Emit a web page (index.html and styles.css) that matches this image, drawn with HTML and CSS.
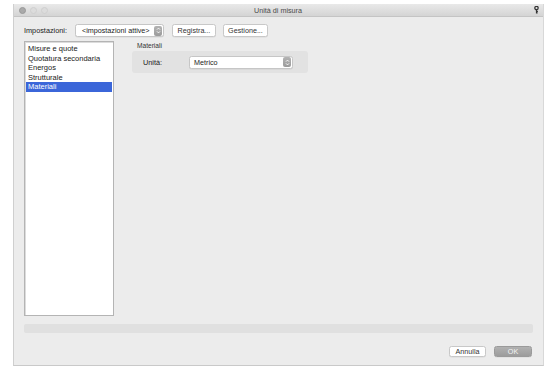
FILE: index.html
```html
<!DOCTYPE html>
<html lang="it">
<head>
<meta charset="utf-8">
<title>Unità di misura</title>
<link rel="stylesheet" href="styles.css">
</head>
<body>
<div class="window">
  <div class="titlebar">
    <div class="lights">
      <span class="light dark"></span>
      <span class="light"></span>
      <span class="light"></span>
    </div>
    <div class="title">Unità di misura</div>
    <svg class="key" width="5" height="8" viewBox="0 0 5 8">
      <circle cx="2.5" cy="2" r="1.7" fill="none" stroke="#333" stroke-width="1.2"/>
      <path d="M2.5 3.5 V7.6 M2.5 5.4 H3.9 M2.5 6.9 H3.6" stroke="#333" stroke-width="1.2" fill="none"/>
    </svg>
  </div>
  <div class="content">
    <div class="toolbar">
      <span class="label">Impostazioni:</span>
      <div class="popup popup-settings">
        <span class="popup-text">&lt;impostazioni attive&gt;</span>
        <span class="stepper"><svg width="5" height="7" viewBox="0 0 5 7"><path d="M1 2.6 L2.5 1.1 L4 2.6 M1 4.4 L2.5 5.9 L4 4.4" stroke="#fff" stroke-width="0.9" fill="none"/></svg></span>
      </div>
      <button class="btn btn-registra">Registra...</button>
      <button class="btn btn-gestione">Gestione...</button>
    </div>
    <div class="main">
      <ul class="list">
        <li>Misure e quote</li>
        <li>Quotatura secondaria</li>
        <li>Energos</li>
        <li>Strutturale</li>
        <li class="selected">Materiali</li>
      </ul>
      <div class="panel">
        <div class="group-title">Materiali</div>
        <div class="group">
          <span class="label-unit">Unità:</span>
          <div class="popup popup-unit">
            <span class="popup-text">Metrico</span>
            <span class="stepper"><svg width="5" height="7" viewBox="0 0 5 7"><path d="M1 2.6 L2.5 1.1 L4 2.6 M1 4.4 L2.5 5.9 L4 4.4" stroke="#fff" stroke-width="0.9" fill="none"/></svg></span>
          </div>
        </div>
      </div>
    </div>
    <div class="stripe"></div>
    <div class="footer">
      <button class="btn btn-annulla">Annulla</button>
      <button class="btn btn-ok">OK</button>
    </div>
  </div>
</div>
</body>
</html>
```
FILE: styles.css
```css
* { box-sizing: border-box; }
html, body { margin: 0; padding: 0; background: #ffffff; }
body {
  font-family: "Liberation Sans", Arial, sans-serif;
  font-size: 7px;
  color: #222;
  width: 555px;
  height: 372px;
  overflow: hidden;
}
.window {
  margin: 4px 0 0 13px;
  width: 531px;
  height: 362px;
  background: #ececec;
  border-left: 1px solid #cfcfcf;
  border-right: 1px solid #d8d8d8;
  border-bottom: 1px solid #c9c9c9;
  display: flex;
  flex-direction: column;
}
.titlebar {
  height: 13px;
  flex: none;
  background: linear-gradient(#e9e9e9, #d4d4d4);
  border-bottom: 1px solid #c4c4c4;
  display: flex;
  align-items: center;
  padding: 0 4px 0 5px;
}
.lights { display: flex; gap: 4px; }
.light {
  width: 7px; height: 7px; border-radius: 50%;
  background: #dcdcdc;
  border: 0.5px solid #cfcfcf;
}
.light.dark { background: #a9a9a9; border-color: #999; }
.title {
  flex: 1;
  text-align: center;
  color: #4a4a4a;
  font-size: 7.2px;
  margin-right: 26px;
}
.key { flex: none; }
.content {
  flex: 1;
  display: flex;
  flex-direction: column;
  padding: 7px 10px 0 9px;
}
.toolbar {
  display: flex;
  align-items: center;
  height: 13px;
}
.label { color: #222; margin-left: 1px; width: 51px; font-size: 7.3px; }
.popup {
  display: flex;
  align-items: center;
  height: 13px;
  background: #fff;
  border: 1px solid #c6c6c6;
  border-radius: 2.5px;
  padding: 0 1px 0 6px;
  box-shadow: 0 0.5px 0.5px rgba(0,0,0,0.08);
}
.popup-text { flex: 1; white-space: nowrap; color: #222; font-size: 7.2px; }
.stepper {
  width: 8px; height: 10px;
  background: linear-gradient(#b3b3b3, #9b9b9b);
  border-radius: 2px;
  display: flex; align-items: center; justify-content: center;
}
.popup-settings { width: 89px; }
.btn {
  font-family: inherit;
  font-size: 7.2px;
  color: #333;
  height: 13px;
  padding: 0;
  background: #fff;
  border: 1px solid #c8c8c8;
  border-radius: 2.5px;
  box-shadow: 0 0.5px 0.5px rgba(0,0,0,0.08);
}
.btn-registra { width: 44px; margin-left: 8px; }
.btn-gestione { width: 45px; margin-left: 7px; }
.main {
  display: flex;
  margin-top: 4px;
  height: 275px;
}
.list {
  list-style: none;
  margin: 0 0 0 1px;
  padding: 2px 1px 0 1px;
  width: 90px;
  height: 275px;
  background: #fff;
  border: 1px solid #b4b4b4;
  border-bottom-width: 1.5px;
  box-shadow: inset 1px 1px 0 #dcdcdc;
}
.list li {
  height: 9.5px;
  line-height: 9.5px;
  padding-left: 2px;
  white-space: nowrap;
  font-size: 7.5px;
  color: #222;
}
.list li.selected { background: #3b66d9; color: #fff; }
.panel {
  margin-left: 18px;
  display: flex;
  flex-direction: column;
}
.group-title { margin: 1px 0 0 5px; height: 9px; line-height: 7px; font-size: 6.6px; color: #333; }
.group {
  width: 176px;
  height: 22px;
  background: #e2e2e2;
  border-radius: 3px;
  display: flex;
  align-items: center;
  padding: 0 15px 0 11px;
}
.label-unit { width: 46px; color: #222; font-size: 7.3px; }
.popup-unit { width: 104px; padding-left: 4px; }
.stripe {
  margin: 8px 0 0 1px;
  height: 9px;
  background: #e0e0e0;
  border-radius: 2px;
}
.footer {
  display: flex;
  justify-content: flex-end;
  margin-top: 13px;
  gap: 8px;
  padding-right: 1px;
}
.footer .btn { height: 11px; }
.btn-annulla { width: 37px; }
.btn-ok {
  width: 38px;
  background: linear-gradient(#b1b1b1, #9c9c9c);
  border-color: #9a9a9a;
  color: #f4f4f4;
}
```
